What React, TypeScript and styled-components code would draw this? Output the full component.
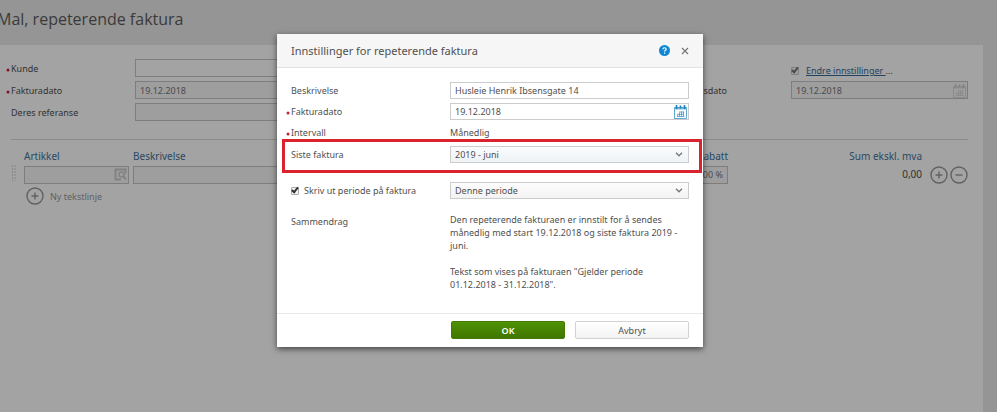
import React, { useState } from "react";
import styled, { createGlobalStyle, css } from "styled-components";

const GlobalStyle = createGlobalStyle`
  *, *::before, *::after { box-sizing: border-box; }
  body { margin: 0; background: #fff; overflow: hidden; }
  body, input, select, button {
    font-family: "Noto Sans", "Open Sans", sans-serif;
    font-size: 9px;
    line-height: 13px;
    color: #505050;
  }
  h1, h2, p { margin: 0; font-weight: 400; }
`;

/* ---------- Invoice page ---------- */

const Screen = styled.div`
  min-height: 100vh;
  padding: 0 2px 1px 0;
  display: flex;
`;

const Viewport = styled.div`
  position: relative;
  flex: 1;
  display: flex;
  overflow: hidden;
  background: #e9e9e9;
`;

const Page = styled.main`
  flex: 1;
  display: flex;
  flex-direction: column;
  padding-right: 14px;
`;

const PageTitle = styled.h1`
  margin-left: -3px;
  padding: 8px 0 15px;
  font-family: "Open Sans", "Noto Sans", sans-serif;
  font-size: 16px;
  line-height: 22px;
  color: #5c5c5c;
`;

const Sheet = styled.section`
  flex: 1;
  padding: 14px 15px 0 6px;
  background: #fff;
`;

const InvoiceForm = styled.form`
  display: grid;
  grid-template-columns: 129px 1fr 129px 177px;
  gap: 4px 0;
  grid-auto-rows: 18px;
  align-items: center;
`;

const Divider = styled.hr`
  margin: 18px 0 8px 5px;
  border: 0;
  border-top: 1px solid #d8d8d8;
`;

const Lines = styled.table`
  width: calc(100% - 5px);
  margin-left: 5px;
  table-layout: fixed;
  border-collapse: collapse;

  th, td { padding: 0 4px 0 0; text-align: left; font-size: 10px; }
  th { height: 17px; font-weight: 400; color: #3f749c; }
  .number { text-align: right; }
  .flush { padding-right: 0; }
`;

const Col = styled.col<{ $w?: number }>`
  width: ${(p) => (p.$w ? `${p.$w}px` : "auto")};
`;

const LineActions = styled.div`
  display: flex;
  justify-content: flex-end;
  gap: 2px;
`;

const RoundButton = styled.button`
  display: flex;
  align-items: center;
  padding: 0;
  gap: 6px;
  border: 0;
  background: none;
  color: #999;

  svg { display: block; }
`;

const AddRow = styled.div`
  padding: 3px 0 0 20px;
`;

const SettingsToggle = styled.div`
  align-self: end;
  display: flex;
  align-items: center;
  gap: 7px;
`;

const SettingsLink = styled.a`
  color: #34699a;
`;

/* ---------- Form controls ---------- */

const LabelText = styled.label`
  display: flex;
  align-items: center;
`;

const Star = styled.span`
  flex: none;
  width: 5px;
  color: #c8202f;
`;

const fieldStyle = css`
  width: 100%;
  min-width: 0;
  border: 1px solid #ccc;
  border-radius: 0;
  padding: 0 4px;
  outline: 0;
`;

const TextInput = styled.input<{ $muted?: boolean; $right?: boolean; $tall?: boolean }>`
  ${fieldStyle}
  display: block;
  height: ${(p) => (p.$tall ? 18 : 17)}px;
  background: ${(p) => (p.$muted ? "#f8f8f8" : "#fff")};
  border-color: ${(p) => (p.$tall ? "#c4c4c4" : "#ccc")};
  color: ${(p) => (p.$muted ? "#777" : "#505050")};
  text-align: ${(p) => (p.$right ? "right" : "left")};
`;

const FieldBox = styled.div`
  display: grid;
  align-items: center;

  > * { grid-area: 1 / 1; }
`;

const FieldButton = styled.button<{ $faded?: boolean }>`
  justify-self: end;
  margin-right: 2px;
  padding: 0;
  border: 0;
  background: none;
  color: ${(p) => (p.$faded ? "#ccc" : "#1c84c0")};

  svg { display: block; }
`;

const SelectInput = styled.select<{ $tint?: boolean }>`
  ${fieldStyle}
  height: 17px;
  appearance: none;
  background: ${(p) =>
    p.$tint ? "linear-gradient(#fafbfc, #eff3f6)" : "linear-gradient(#fdfdfd, #f3f3f3)"};
`;

const ChevronBox = styled.span`
  justify-self: end;
  margin-right: 6px;
  pointer-events: none;
  color: #777;

  svg { display: block; }
`;

const CheckBox = styled.input.attrs({ type: "checkbox" })<{ $soft?: boolean }>`
  appearance: none;
  flex: none;
  display: grid;
  place-items: center;
  width: 8px;
  height: 8px;
  margin: 0;
  border: 1px solid ${(p) => (p.$soft ? "#c8c8c8" : "#aaa")};
  border-radius: 1px;
  background: #f6f6f6;

  &:checked::after {
    content: "";
    width: 4px;
    height: 7px;
    margin-top: -3px;
    border: solid ${(p) => (p.$soft ? "#777" : "#333")};
    border-width: 0 2px 2px 0;
    transform: rotate(40deg);
  }
`;

/* ---------- Dialog ---------- */

const Overlay = styled.div`
  position: absolute;
  inset: 0;
  padding: 34px 17px 0 0;
  display: flex;
  justify-content: center;
  align-items: flex-start;
  background: rgba(0, 0, 0, 0.36);
`;

const Dialog = styled.div`
  width: 426px;
  max-width: 100%;
  background: #fff;
  box-shadow: 0 2px 6px rgba(0, 0, 0, 0.6);
`;

const DialogHeader = styled.header`
  display: flex;
  align-items: center;
  gap: 11px;
  height: 34px;
  padding: 0 14px;
  background: #f6f6f6;
  border-bottom: 1px solid #e2e2e2;
`;

const DialogTitle = styled.h2`
  flex: 1;
  font-size: 11px;
  line-height: 16px;
  color: #505050;
`;

const IconButton = styled.button`
  padding: 0;
  border: 0;
  background: none;
  color: #777;

  svg { display: block; }
`;

const DialogBody = styled.form`
  display: flex;
  flex-direction: column;
  gap: 4px;
  padding: 14px 14px 22px 9px;
`;

const Row = styled.div<{ $gap?: number; $top?: boolean }>`
  position: relative;
  display: grid;
  grid-template-columns: 164px 1fr;
  align-items: ${(p) => (p.$top ? "start" : "center")};
  min-height: 17px;
  margin-top: ${(p) => p.$gap ?? 0}px;
`;

const MarkedRow = styled(Row)`
  &::after {
    content: "";
    position: absolute;
    inset: -7px -13px -10px -4px;
    border: 3px solid #d9232f;
    pointer-events: none;
  }
`;

const CheckLabel = styled.label`
  display: flex;
  align-items: center;
  gap: 5px;
  padding-left: 5px;
`;

const SummaryLabel = styled.span`
  padding: 2px 0 0 5px;
`;

const Summary = styled.div`
  display: grid;
  gap: 13px;
`;

const DialogFooter = styled.footer`
  display: flex;
  justify-content: flex-end;
  gap: 10px;
  padding: 7px 14px 8px;
  border-top: 1px solid #e8e8e8;
`;

const FooterButton = styled.button<{ $primary?: boolean }>`
  width: 114px;
  height: 18px;
  padding: 0;
  border-radius: 2px;
  border: 1px solid ${(p) => (p.$primary ? "#437c02" : "#d2d2d2")};
  background: ${(p) =>
    p.$primary ? "linear-gradient(#4f9104, #407600)" : "linear-gradient(#fff, #f3f3f3)"};
  color: ${(p) => (p.$primary ? "#fff" : "#505050")};
  font-weight: ${(p) => (p.$primary ? 600 : 400)};
`;

/* ---------- Icons ---------- */

const CalendarIcon = () => (
  <svg width="13" height="15" viewBox="0 0 13 15" fill="none" stroke="currentColor">
    <path d="M.5 3.500h12v11H.5z" opacity=".7" />
    <path d="M1 4.500h11" strokeWidth="2" opacity=".55" />
    <path d="M2.500 1v4M6.500 1.500v3M10.500 1v4" strokeWidth="1.600" />
    <path d="M3.500 12.500v-2M5.500 12.500v-4M7.500 12.500v-5M9.500 12.500v-5M3 12.500h7.500M5 8h5M3 10.300h7" strokeWidth=".8" opacity=".8" />
  </svg>
);

const SearchBoxIcon = () => (
  <svg width="13" height="13" viewBox="0 0 13 13" fill="none" stroke="currentColor" strokeWidth="2">
    <path d="M7 11.500H1.500v-10h10v4" />
    <circle cx="7.500" cy="6.500" r="2.500" strokeWidth="1.500" />
    <path d="M9.500 8.500l2.500 3" />
  </svg>
);

const CircleIcon = ({ plus }: { plus?: boolean }) => (
  <svg width="18" height="18" viewBox="0 0 18 18" fill="none" stroke="currentColor" strokeWidth="1.400">
    <circle cx="9" cy="9" r="8" />
    <path d={plus ? "M5.500 9h7M9 5.500v7" : "M5.500 9h7"} />
  </svg>
);

const GripIcon = () => (
  <svg width="5" height="16" viewBox="0 0 5 16" fill="none" stroke="#d4d4d4" strokeDasharray="2 1">
    <path d="M1.500 0v16M4 0v16" />
  </svg>
);

const ChevronIcon = () => (
  <svg width="8" height="5" viewBox="0 0 8 5" fill="none" stroke="currentColor" strokeWidth="1.300">
    <path d="M1 .8l3 3 3-3" />
  </svg>
);

const HelpIcon = () => (
  <svg width="11" height="11" viewBox="0 0 11 11" fill="none">
    <circle cx="5.500" cy="5.500" r="5.500" fill="#0f87d2" />
    <path d="M3.900 4.300c0-2.100 3.300-2 3.300-.1 0 1.200-1.600 1.100-1.600 2.400M5.600 7.500v1.200" stroke="#fff" strokeWidth="1.200" />
  </svg>
);

const CloseIcon = () => (
  <svg width="8" height="8" viewBox="0 0 8 8" fill="none" stroke="currentColor" strokeWidth="1.200">
    <path d="M1 1l6 6M7 1L1 7" />
  </svg>
);

const StarIcon = () => (
  <svg width="4" height="4" viewBox="0 0 4 4" fill="currentColor">
    <circle cx="2" cy="2" r="1.500" />
  </svg>
);

/* ---------- Composition ---------- */

const FieldLabel = ({ id, required, children }: { id?: string; required?: boolean; children: React.ReactNode }) => (
  <LabelText htmlFor={id}>
    <Star>{required && <StarIcon />}</Star>
    {children}
  </LabelText>
);

const DateField = ({ id, value, faded }: { id: string; value: string; faded?: boolean }) => (
  <FieldBox>
    <TextInput id={id} defaultValue={value} $muted={faded} $tall={faded} />
    <FieldButton type="button" aria-label="Velg dato" $faded={faded}>
      <CalendarIcon />
    </FieldButton>
  </FieldBox>
);

const SelectField = ({ id, label, option, tint }: { id: string; label?: string; option: string; tint?: boolean }) => (
  <FieldBox>
    <SelectInput id={id} aria-label={label} $tint={tint}>
      <option>{option}</option>
    </SelectInput>
    <ChevronBox>
      <ChevronIcon />
    </ChevronBox>
  </FieldBox>
);

function InvoicePage() {
  return (
    <Page>
      <PageTitle>Mal, repeterende faktura</PageTitle>
      <Sheet>
        <InvoiceForm>
          <FieldLabel id="customer" required>Kunde</FieldLabel>
          <TextInput id="customer" $tall />
          <span />
          <SettingsToggle>
            <CheckBox defaultChecked aria-label="Repeterende" $soft />
            <span>
              <SettingsLink href="#innstillinger">Endre innstillinger </SettingsLink>...
            </span>
          </SettingsToggle>
          <FieldLabel id="invoice-date" required>Fakturadato</FieldLabel>
          <TextInput id="invoice-date" defaultValue="19.12.2018" $muted $tall />
          <FieldLabel id="delivery-date">Leveringsdato</FieldLabel>
          <DateField id="delivery-date" value="19.12.2018" faded />
          <FieldLabel id="reference">Deres referanse</FieldLabel>
          <TextInput id="reference" $muted $tall />
        </InvoiceForm>
        <Divider />
        <Lines>
          <colgroup>
            <Col $w={13} />
            <Col $w={109} />
            <Col />
            <Col $w={59} />
            <Col $w={194} />
            <Col $w={42} />
          </colgroup>
          <thead>
            <tr>
              <th />
              <th>Artikkel</th>
              <th>Beskrivelse</th>
              <th className="number">Rabatt</th>
              <th className="number">Sum ekskl. mva</th>
              <th />
            </tr>
          </thead>
          <tbody>
            <tr>
              <td><GripIcon /></td>
              <td>
                <FieldBox>
                  <TextInput aria-label="Artikkel" $muted $tall />
                  <FieldButton type="button" aria-label="Søk artikkel" $faded>
                    <SearchBoxIcon />
                  </FieldButton>
                </FieldBox>
              </td>
              <td><TextInput aria-label="Beskrivelse" $muted $tall /></td>
              <td><TextInput aria-label="Rabatt" defaultValue="0,00 %" $muted $right $tall /></td>
              <td className="number">0,00</td>
              <td className="flush">
                <LineActions>
                  <RoundButton type="button" aria-label="Legg til linje"><CircleIcon plus /></RoundButton>
                  <RoundButton type="button" aria-label="Fjern linje"><CircleIcon /></RoundButton>
                </LineActions>
              </td>
            </tr>
          </tbody>
        </Lines>
        <AddRow>
          <RoundButton type="button"><CircleIcon plus />Ny tekstlinje</RoundButton>
        </AddRow>
      </Sheet>
    </Page>
  );
}

function SettingsDialog() {
  const [printPeriod, setPrintPeriod] = useState(true);
  return (
    <Dialog role="dialog" aria-modal="true" aria-labelledby="dialog-title">
      <DialogHeader>
        <DialogTitle id="dialog-title">Innstillinger for repeterende faktura</DialogTitle>
        <IconButton type="button" aria-label="Hjelp"><HelpIcon /></IconButton>
        <IconButton type="button" aria-label="Lukk"><CloseIcon /></IconButton>
      </DialogHeader>
      <DialogBody id="settings">
        <Row>
          <FieldLabel id="description">Beskrivelse</FieldLabel>
          <TextInput id="description" defaultValue="Husleie Henrik Ibsensgate 14" />
        </Row>
        <Row>
          <FieldLabel id="date" required>Fakturadato</FieldLabel>
          <DateField id="date" value="19.12.2018" />
        </Row>
        <Row>
          <FieldLabel required>Intervall</FieldLabel>
          <span>Månedlig</span>
        </Row>
        <MarkedRow $gap={1}>
          <FieldLabel id="last">Siste faktura</FieldLabel>
          <SelectField id="last" option="2019 - juni" tint />
        </MarkedRow>
        <Row $gap={15}>
          <CheckLabel>
            <CheckBox checked={printPeriod} onChange={(e) => setPrintPeriod(e.target.checked)} />
            Skriv ut periode på faktura
          </CheckLabel>
          <SelectField id="period" label="Periode" option="Denne periode" />
        </Row>
        <Row $gap={10} $top>
          <SummaryLabel>Sammendrag</SummaryLabel>
          <Summary>
            <p>
              Den repeterende fakturaen er innstilt for å sendes månedlig med start 19.12.2018 og siste
              faktura 2019 - juni.
            </p>
            <p>Tekst som vises på fakturaen "Gjelder periode 01.12.2018 - 31.12.2018".</p>
          </Summary>
        </Row>
      </DialogBody>
      <DialogFooter>
        <FooterButton type="submit" form="settings" $primary>OK</FooterButton>
        <FooterButton type="button">Avbryt</FooterButton>
      </DialogFooter>
    </Dialog>
  );
}

export default function App() {
  return (
    <Screen>
      <GlobalStyle />
      <Viewport>
        <InvoicePage />
        <Overlay>
          <SettingsDialog />
        </Overlay>
      </Viewport>
    </Screen>
  );
}
